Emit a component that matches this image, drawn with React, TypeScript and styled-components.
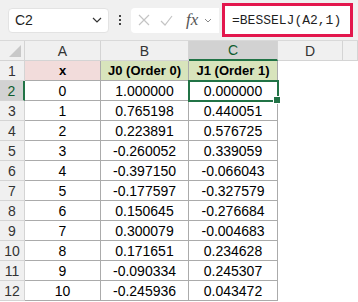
import React from 'react';
import styled, { createGlobalStyle } from 'styled-components';

const GlobalStyle = createGlobalStyle`
  body {
    margin: 0;
    background: #ffffff;
    font-family: "Liberation Sans", Arial, sans-serif;
  }
`;

const green = '#217346';

const Page = styled.div`
  width: 358px;
  height: 302px;
  overflow: hidden;
  background: #ffffff;
`;

const Toolbar = styled.div`
  height: 41px;
  background: #f0f0f0;
  display: flex;
  align-items: center;
  padding-left: 8px;
  box-sizing: border-box;
  border-bottom: 1px solid #d9d9d9;
`;

const NameBox = styled.div`
  width: 101px;
  height: 25px;
  background: #ffffff;
  border-radius: 4px;
  box-sizing: border-box;
  border: 1px solid #e3e3e3;
  display: flex;
  align-items: center;
  justify-content: space-between;
  padding: 0 6px 0 6px;
  font-size: 14px;
  color: #1f1f1f;
`;

const Dots = styled.div`
  width: 22px;
  display: flex;
  flex-direction: column;
  align-items: center;
  gap: 2px;
  & span {
    width: 2px;
    height: 2px;
    background: #444;
  }
`;

const FormulaTools = styled.div`
  width: 88px;
  height: 25px;
  background: #ffffff;
  border-radius: 4px 0 0 4px;
  display: flex;
  align-items: center;
  padding-left: 7px;
  gap: 10px;
  box-sizing: border-box;
`;

const Fx = styled.span`
  font-family: "Liberation Serif", serif;
  font-style: italic;
  font-size: 17px;
  color: #555;
  margin-left: 3px;
  margin-right: -4px;
`;

const FormulaInput = styled.div`
  width: 131px;
  height: 34px;
  margin-left: 3px;
  box-sizing: border-box;
  border: 3px solid #e3174d;
  background: #ffffff;
  display: flex;
  align-items: center;
  padding-left: 7px;
  font-family: "Liberation Mono", monospace;
  font-size: 13px;
  color: #1f1f1f;
`;

const Grid = styled.div`
  display: grid;
  grid-template-columns: 25px 76px 88px 89px 65px 15px;
  grid-auto-rows: 20px;
`;

const ColHead = styled.div<{ $active?: boolean }>`
  background: ${(p) => (p.$active ? '#d2d2d2' : '#f0f0f0')};
  color: ${(p) => (p.$active ? '#0e5c2f' : '#333333')};
  border-right: 1px solid #d4d4d4;
  border-bottom: ${(p) => (p.$active ? `2px solid ${green}` : '1px solid #d4d4d4')};
  box-sizing: border-box;
  display: flex;
  align-items: center;
  justify-content: center;
  font-size: 14px;
`;

const Corner = styled.div`
  background: #f0f0f0;
  border-right: 1px solid #d4d4d4;
  border-bottom: 1px solid #d4d4d4;
  box-sizing: border-box;
  position: relative;
  &::after {
    content: '';
    position: absolute;
    right: 3px;
    bottom: 3px;
    border-left: 12px solid transparent;
    border-bottom: 12px solid #c8c8c8;
  }
`;

const RowHead = styled.div<{ $active?: boolean }>`
  background: ${(p) => (p.$active ? '#d2d2d2' : '#f0f0f0')};
  color: ${(p) => (p.$active ? '#0e5c2f' : '#333333')};
  border-right: ${(p) => (p.$active ? `2px solid ${green}` : '1px solid #d4d4d4')};
  border-bottom: 1px solid #d4d4d4;
  box-sizing: border-box;
  display: flex;
  align-items: center;
  justify-content: center;
  font-size: 14px;
`;

const Cell = styled.div<{ $fill?: string; $bold?: boolean; $selected?: boolean }>`
  background: ${(p) => p.$fill || '#ffffff'};
  font-weight: ${(p) => (p.$bold ? 700 : 400)};
  font-size: ${(p) => (p.$bold ? '13px' : '14px')};
  border-right: 1px solid #ababab;
  border-bottom: 1px solid #ababab;
  box-sizing: border-box;
  display: flex;
  align-items: center;
  justify-content: center;
  color: #000000;
  position: relative;
  ${(p) =>
    p.$selected &&
    `
    outline: 2px solid ${green};
    outline-offset: -1px;
    z-index: 1;
  `}
`;

const FillHandle = styled.span`
  position: absolute;
  right: -4px;
  bottom: -4px;
  width: 6px;
  height: 6px;
  background: ${green};
  border: 1px solid #ffffff;
`;

const Blank = styled.div`
  background: #ffffff;
`;

const rows: [string, string, string][] = [
  ['0', '1.000000', '0.000000'],
  ['1', '0.765198', '0.440051'],
  ['2', '0.223891', '0.576725'],
  ['3', '-0.260052', '0.339059'],
  ['4', '-0.397150', '-0.066043'],
  ['5', '-0.177597', '-0.327579'],
  ['6', '0.150645', '-0.276684'],
  ['7', '0.300079', '-0.004683'],
  ['8', '0.171651', '0.234628'],
  ['9', '-0.090334', '0.245307'],
  ['10', '-0.245936', '0.043472'],
];

export default function App() {
  return (
    <Page>
      <GlobalStyle />
      <Toolbar>
        <NameBox>
          <span>C2</span>
          <svg width="10" height="6" viewBox="0 0 10 6">
            <path d="M1 1 L5 5 L9 1" fill="none" stroke="#333" strokeWidth="1.2" />
          </svg>
        </NameBox>
        <Dots>
          <span />
          <span />
          <span />
        </Dots>
        <FormulaTools>
          <svg width="12" height="12" viewBox="0 0 12 12">
            <path d="M1 1 L11 11 M11 1 L1 11" stroke="#c4c4c4" strokeWidth="1.2" />
          </svg>
          <svg width="13" height="11" viewBox="0 0 13 11">
            <path d="M1 6 L5 10 L12 1" fill="none" stroke="#c4c4c4" strokeWidth="1.2" />
          </svg>
          <Fx>fx</Fx>
          <svg width="8" height="5" viewBox="0 0 8 5">
            <path d="M1 1 L4 4 L7 1" fill="none" stroke="#888" strokeWidth="1" />
          </svg>
        </FormulaTools>
        <FormulaInput>=BESSELJ(A2,1)</FormulaInput>
      </Toolbar>
      <Grid>
        <Corner />
        <ColHead>A</ColHead>
        <ColHead>B</ColHead>
        <ColHead $active>C</ColHead>
        <ColHead>D</ColHead>
        <ColHead />

        <RowHead>1</RowHead>
        <Cell $fill="#f2dcdb" $bold>x</Cell>
        <Cell $fill="#d8e4bc" $bold>J0 (Order 0)</Cell>
        <Cell $fill="#d8e4bc" $bold>J1 (Order 1)</Cell>
        <Blank />
        <Blank />

        {rows.map((r, i) => (
          <React.Fragment key={i}>
            <RowHead $active={i === 0}>{i + 2}</RowHead>
            <Cell>{r[0]}</Cell>
            <Cell>{r[1]}</Cell>
            <Cell $selected={i === 0}>
              {r[2]}
              {i === 0 && <FillHandle />}
            </Cell>
            <Blank />
            <Blank />
          </React.Fragment>
        ))}
      </Grid>
    </Page>
  );
}
